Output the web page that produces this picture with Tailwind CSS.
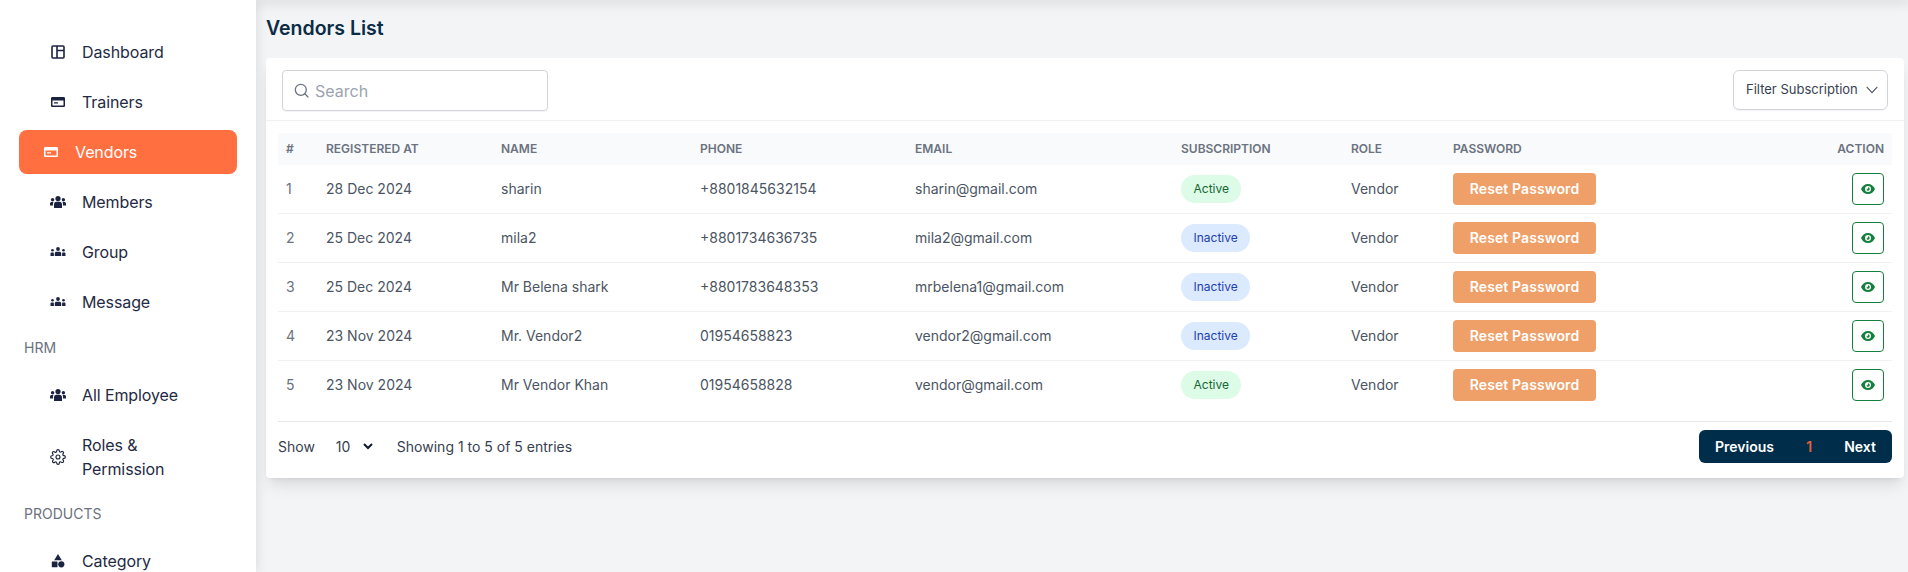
<!DOCTYPE html>
<html lang="en">
<head>
	<meta charset="UTF-8">
	<meta name="viewport" content="width=device-width, initial-scale=1.0">
	<title>Vendors List</title>
	<script src="https://cdn.jsdelivr.net/npm/@tailwindcss/browser@4"></script>
</head>
<body class="bg-[#f3f4f6] font-['Inter',sans-serif] h-[572px] overflow-hidden flex">

<aside class="w-[256px] h-[572px] shrink-0 bg-white shadow-[0_0_12px_rgba(0,0,0,0.12)] overflow-hidden pt-[30px] text-base tracking-[-0.1px] text-[#1f2a44] z-10">
	<a class="h-11 mb-1.5 flex items-center pl-[51px]">
		<svg class="w-[14px] h-[14px] mr-[17px]" viewBox="0 0 14 14" fill="none" stroke="#1c2340" stroke-width="1.600"><rect x="1" y="1" width="12" height="12" rx="1"/><path d="M6 1v12M6 5.500h7"/></svg>
		Dashboard
	</a>
	<a class="h-11 mb-1.5 flex items-center pl-[51px]">
		<svg class="w-[14px] h-[14px] mr-[17px]" viewBox="0 0 14 14" fill="#1c2340"><path fill-rule="evenodd" d="M1.300 2h11.400c.7 0 1.300.6 1.300 1.300v7.400c0 .7-.6 1.300-1.300 1.300H1.300C.6 12 0 11.400 0 10.700V3.300C0 2.600.6 2 1.300 2zM1.500 5.500v5h11v-5zM3 7.200h4v1.400H3z"/></svg>
		Trainers
	</a>
	<a class="h-11 mb-1.5 mx-[19px] flex items-center pl-[25px] bg-[#ff6f3f] rounded-lg text-white">
		<svg class="w-[14px] h-[14px] mr-[17px]" viewBox="0 0 14 14" fill="#fff"><path fill-rule="evenodd" d="M1.300 2h11.400c.7 0 1.300.6 1.300 1.300v7.400c0 .7-.6 1.300-1.300 1.300H1.300C.6 12 0 11.400 0 10.700V3.300C0 2.600.6 2 1.300 2zM1.500 5.500v5h11v-5zM3 7.200h4v1.400H3z"/></svg>
		Vendors
	</a>
	<a class="h-11 mb-1.5 flex items-center pl-[50px]">
		<svg class="w-4 h-4 mr-4" viewBox="0 0 16 16" fill="#1c2340"><circle cx="8" cy="4.600" r="2.600"/><circle cx="2.600" cy="5.800" r="1.700"/><circle cx="13.400" cy="5.800" r="1.700"/><path d="M4 14v-3.500C4 8.800 5 7.800 6.400 7.800h3.200c1.400 0 2.400 1 2.400 2.700V14zM0 11.500V9.600C0 8.500.8 8 1.600 8h1.900C3 8.800 3 9.500 3 11.500zM16 11.500V9.600C16 8.500 15.200 8 14.400 8h-1.900c.5.800.5 1.500.5 3.500z"/></svg>
		Members
	</a>
	<a class="h-11 mb-1.5 flex items-center pl-[50px]">
		<svg class="w-4 h-4 mr-4" viewBox="0 0 16 16" fill="#1c2340"><circle cx="8" cy="5" r="1.900"/><circle cx="2.500" cy="6.300" r="1.300"/><circle cx="13.500" cy="6.300" r="1.300"/><path d="M4.800 12V9.500c0-1.100.8-1.700 1.700-1.700h3c.9 0 1.700.6 1.700 1.700V12zM.5 12V9.500c0-.7.5-1.100 1.200-1.100h1.900c.2 0 .3 1 .3 3.600zM15.500 12V9.500c0-.7-.5-1.100-1.200-1.100h-1.900c-.2 0-.3 1-.3 3.600z"/></svg>
		Group
	</a>
	<a class="h-11 flex items-center pl-[50px]">
		<svg class="w-4 h-4 mr-4" viewBox="0 0 16 16" fill="#1c2340"><circle cx="8" cy="5" r="1.900"/><circle cx="2.500" cy="6.300" r="1.300"/><circle cx="13.500" cy="6.300" r="1.300"/><path d="M4.800 12V9.500c0-1.100.8-1.700 1.700-1.700h3c.9 0 1.700.6 1.700 1.700V12zM.5 12V9.500c0-.7.5-1.100 1.200-1.100h1.900c.2 0 .3 1 .3 3.600zM15.500 12V9.500c0-.7-.5-1.100-1.200-1.100h-1.900c-.2 0-.3 1-.3 3.600z"/></svg>
		Message
	</a>

	<p class="pl-6 mt-[16px] mb-[17px] text-sm leading-4 tracking-normal text-[#6b7280]">HRM</p>
	<a class="h-11 flex items-center pl-[50px]">
		<svg class="w-4 h-4 mr-4" viewBox="0 0 16 16" fill="#1c2340"><circle cx="8" cy="4.600" r="2.600"/><circle cx="2.600" cy="5.800" r="1.700"/><circle cx="13.400" cy="5.800" r="1.700"/><path d="M4 14v-3.500C4 8.800 5 7.800 6.400 7.800h3.200c1.400 0 2.400 1 2.400 2.700V14zM0 11.500V9.600C0 8.500.8 8 1.600 8h1.900C3 8.800 3 9.500 3 11.500zM16 11.500V9.600C16 8.500 15.200 8 14.400 8h-1.900c.5.800.5 1.500.5 3.500z"/></svg>
		All Employee
	</a>
	<a class="mt-1.5 h-[68px] flex items-center pl-[50px] leading-6">
		<svg class="w-4 h-4 mr-4 shrink-0" viewBox="0 0 24 24" fill="none" stroke="#1c2340" stroke-width="1.700" stroke-linecap="round" stroke-linejoin="round"><circle cx="12" cy="12" r="3"/><path d="M19.400 15a1.650 1.650 0 0 0 .33 1.820l.06.06a2 2 0 1 1-2.830 2.830l-.06-.06a1.650 1.650 0 0 0-2.800 1.170V21a2 2 0 1 1-4 0v-.09a1.650 1.650 0 0 0-2.820-1.110l-.06.06a2 2 0 1 1-2.830-2.830l.06-.06a1.650 1.650 0 0 0-1.170-2.800H3a2 2 0 1 1 0-4h.09a1.650 1.650 0 0 0 1.110-2.820l-.06-.06a2 2 0 1 1 2.830-2.830l.06.06a1.650 1.650 0 0 0 1.820.33H9a1.650 1.650 0 0 0 1-1.510V3a2 2 0 1 1 4 0v.09a1.650 1.650 0 0 0 2.800 1.170l.06-.06a2 2 0 1 1 2.830 2.830l-.06.06a1.650 1.650 0 0 0-.33 1.820V9a1.650 1.650 0 0 0 1.510 1H21a2 2 0 1 1 0 4h-.09a1.650 1.650 0 0 0-1.510 1z"/></svg>
		<span class="w-[110px]">Roles &amp; Permission</span>
	</a>
	<p class="pl-6 mt-[15px] mb-[17px] text-sm leading-4 tracking-normal text-[#6b7280]">PRODUCTS</p>
	<a class="h-11 flex items-center pl-[51px]">
		<svg class="w-[14px] h-[14px] mr-[17px]" viewBox="0 0 14 14" fill="#1c2340"><path d="M7 0l3.800 6.300H3.200z"/><rect x=".8" y="7.500" width="5.700" height="5.700" rx=".5"/><circle cx="10.300" cy="10.300" r="3.100"/></svg>
		Category
	</a>
</aside>

<main class="flex-1 min-w-0">
	<div class="h-0 shadow-[0_0_12px_3px_rgba(0,0,0,0.14)]"></div>
	<h1 class="pl-[10px] pr-1 pt-4 h-[58px] text-[19.5px] leading-6 font-semibold text-[#0b2c45]">Vendors List</h1>

	<section class="ml-[10px] mr-1 h-[420px] bg-white rounded-sm shadow-lg">
		<div class="h-[63px] pt-3 pl-4 pr-4 flex justify-between items-start border-b border-[#f0f1f3]">
			<label class="w-[266px] h-[41px] flex items-center pl-[11px] gap-[6px] border border-[#d1d5db] rounded text-base text-[#9ca3af] shadow-[0_1px_1px_rgba(0,0,0,0.05)]">
				<svg class="w-[15px] h-[15px]" viewBox="0 0 15 15" fill="none" stroke="#6b7280" stroke-width="1.300" stroke-linecap="round"><circle cx="6.800" cy="6.800" r="5.500"/><path d="M11 11l3 3"/></svg>
				Search
			</label>
			<button class="w-[155px] h-10 pl-3 flex items-center gap-2 border border-[#d1d5db] rounded-md text-[13px] text-[#374151] shadow-[0_1px_1px_rgba(0,0,0,0.05)]">
				Filter Subscription
				<svg class="w-3 h-2" viewBox="0 0 11 7" fill="none" stroke="#4b5563" stroke-width="1"><path d="M.6.600L5.500 6 10.400.600"/></svg>
			</button>
		</div>

		<div class="mx-3 mt-3">
			<table class="w-[1614px] table-fixed border-separate border-spacing-0 text-sm text-[#4b5563]">
				<colgroup>
					<col class="w-[40px]"><col class="w-[175px]"><col class="w-[199px]"><col class="w-[215px]"><col class="w-[266px]"><col class="w-[170px]"><col class="w-[102px]"><col class="w-[300px]"><col>
				</colgroup>
				<thead>
					<tr class="h-8 bg-[#f9fafb] text-xs font-semibold text-[#6b7280] text-left">
						<th class="px-2 font-semibold">#</th>
						<th class="px-2 font-semibold">REGISTERED AT</th>
						<th class="px-2 font-semibold">NAME</th>
						<th class="px-2 font-semibold">PHONE</th>
						<th class="px-2 font-semibold">EMAIL</th>
						<th class="px-2 font-semibold">SUBSCRIPTION</th>
						<th class="px-2 font-semibold">ROLE</th>
						<th class="px-2 font-semibold">PASSWORD</th>
						<th class="px-2 font-semibold text-right">ACTION</th>
					</tr>
				</thead>
				<tbody>
					<tr class="h-[49px] [&>td]:border-b [&>td]:border-[#f0f1f3]">
						<td class="px-2 text-[#6b7280]">1</td><td class="px-2">28 Dec 2024</td><td class="px-2">sharin</td><td class="px-2">+8801845632154</td><td class="px-2">sharin@gmail.com</td>
						<td class="px-2"><span class="inline-flex items-center h-7 px-[12.5px] rounded-[14px] bg-[#dcfce7] text-xs text-[#166534]">Active</span></td>
						<td class="px-2">Vendor</td>
						<td class="px-2"><button class="w-[143px] h-8 rounded bg-[#ef9f68] text-white font-semibold tracking-[0.1px]">Reset Password</button></td>
						<td class="px-2 text-right"><button class="inline-flex items-center justify-center w-8 h-8 border border-[#15803d] rounded align-middle"><svg class="w-[14px] h-[10px]" viewBox="0 0 14 10"><path fill="#15803d" fill-rule="evenodd" d="M7 0c3.200 0 5.800 2 7 5-1.200 3-3.800 5-7 5S1.200 8 0 5c1.200-3 3.800-5 7-5zm0 2a3 3 0 1 0 0 6 3 3 0 0 0 0-6zm0 1.300a1.700 1.700 0 1 1-1.600 2.200c.8.200 1.900-.8 1.600-2.200z"/></svg></button></td>
					</tr>
					<tr class="h-[49px] [&>td]:border-b [&>td]:border-[#f0f1f3]">
						<td class="px-2 text-[#6b7280]">2</td><td class="px-2">25 Dec 2024</td><td class="px-2">mila2</td><td class="px-2">+8801734636735</td><td class="px-2">mila2@gmail.com</td>
						<td class="px-2"><span class="inline-flex items-center h-7 px-[12.5px] rounded-[14px] bg-[#dbeafe] text-xs text-[#1e40af]">Inactive</span></td>
						<td class="px-2">Vendor</td>
						<td class="px-2"><button class="w-[143px] h-8 rounded bg-[#ef9f68] text-white font-semibold tracking-[0.1px]">Reset Password</button></td>
						<td class="px-2 text-right"><button class="inline-flex items-center justify-center w-8 h-8 border border-[#15803d] rounded align-middle"><svg class="w-[14px] h-[10px]" viewBox="0 0 14 10"><path fill="#15803d" fill-rule="evenodd" d="M7 0c3.200 0 5.800 2 7 5-1.200 3-3.800 5-7 5S1.200 8 0 5c1.200-3 3.800-5 7-5zm0 2a3 3 0 1 0 0 6 3 3 0 0 0 0-6zm0 1.300a1.700 1.700 0 1 1-1.600 2.200c.8.200 1.900-.8 1.600-2.200z"/></svg></button></td>
					</tr>
					<tr class="h-[49px] [&>td]:border-b [&>td]:border-[#f0f1f3]">
						<td class="px-2 text-[#6b7280]">3</td><td class="px-2">25 Dec 2024</td><td class="px-2">Mr Belena shark</td><td class="px-2">+8801783648353</td><td class="px-2">mrbelena1@gmail.com</td>
						<td class="px-2"><span class="inline-flex items-center h-7 px-[12.5px] rounded-[14px] bg-[#dbeafe] text-xs text-[#1e40af]">Inactive</span></td>
						<td class="px-2">Vendor</td>
						<td class="px-2"><button class="w-[143px] h-8 rounded bg-[#ef9f68] text-white font-semibold tracking-[0.1px]">Reset Password</button></td>
						<td class="px-2 text-right"><button class="inline-flex items-center justify-center w-8 h-8 border border-[#15803d] rounded align-middle"><svg class="w-[14px] h-[10px]" viewBox="0 0 14 10"><path fill="#15803d" fill-rule="evenodd" d="M7 0c3.200 0 5.800 2 7 5-1.200 3-3.800 5-7 5S1.200 8 0 5c1.200-3 3.800-5 7-5zm0 2a3 3 0 1 0 0 6 3 3 0 0 0 0-6zm0 1.300a1.700 1.700 0 1 1-1.600 2.200c.8.200 1.900-.8 1.600-2.200z"/></svg></button></td>
					</tr>
					<tr class="h-[49px] [&>td]:border-b [&>td]:border-[#f0f1f3]">
						<td class="px-2 text-[#6b7280]">4</td><td class="px-2">23 Nov 2024</td><td class="px-2">Mr. Vendor2</td><td class="px-2">01954658823</td><td class="px-2">vendor2@gmail.com</td>
						<td class="px-2"><span class="inline-flex items-center h-7 px-[12.5px] rounded-[14px] bg-[#dbeafe] text-xs text-[#1e40af]">Inactive</span></td>
						<td class="px-2">Vendor</td>
						<td class="px-2"><button class="w-[143px] h-8 rounded bg-[#ef9f68] text-white font-semibold tracking-[0.1px]">Reset Password</button></td>
						<td class="px-2 text-right"><button class="inline-flex items-center justify-center w-8 h-8 border border-[#15803d] rounded align-middle"><svg class="w-[14px] h-[10px]" viewBox="0 0 14 10"><path fill="#15803d" fill-rule="evenodd" d="M7 0c3.200 0 5.800 2 7 5-1.200 3-3.800 5-7 5S1.200 8 0 5c1.200-3 3.800-5 7-5zm0 2a3 3 0 1 0 0 6 3 3 0 0 0 0-6zm0 1.300a1.700 1.700 0 1 1-1.600 2.200c.8.200 1.900-.8 1.600-2.200z"/></svg></button></td>
					</tr>
					<tr class="h-12">
						<td class="px-2 text-[#6b7280]">5</td><td class="px-2">23 Nov 2024</td><td class="px-2">Mr Vendor Khan</td><td class="px-2">01954658828</td><td class="px-2">vendor@gmail.com</td>
						<td class="px-2"><span class="inline-flex items-center h-7 px-[12.5px] rounded-[14px] bg-[#dcfce7] text-xs text-[#166534]">Active</span></td>
						<td class="px-2">Vendor</td>
						<td class="px-2"><button class="w-[143px] h-8 rounded bg-[#ef9f68] text-white font-semibold tracking-[0.1px]">Reset Password</button></td>
						<td class="px-2 text-right"><button class="inline-flex items-center justify-center w-8 h-8 border border-[#15803d] rounded align-middle"><svg class="w-[14px] h-[10px]" viewBox="0 0 14 10"><path fill="#15803d" fill-rule="evenodd" d="M7 0c3.200 0 5.800 2 7 5-1.200 3-3.800 5-7 5S1.200 8 0 5c1.200-3 3.800-5 7-5zm0 2a3 3 0 1 0 0 6 3 3 0 0 0 0-6zm0 1.300a1.700 1.700 0 1 1-1.600 2.200c.8.200 1.900-.8 1.600-2.200z"/></svg></button></td>
					</tr>
				</tbody>
			</table>

			<div class="w-[1614px] mt-3 pt-2 border-t border-[#e5e7eb] flex items-center justify-between text-sm text-[#374151]">
				<div class="flex items-center">
					<span>Show</span>
					<span class="ml-[21px] w-[27px]">10</span>
					<svg class="w-[10px] h-[7px]" viewBox="0 0 10 7" fill="none" stroke="#111827" stroke-width="2"><path d="M1 1l4 4 4-4"/></svg>
					<span class="ml-[24px]">Showing 1 to 5 of 5 entries</span>
				</div>
				<div class="w-[193px] h-[33px] pl-4 pr-4 flex items-center justify-between bg-[#002d4a] rounded-md font-semibold text-white">
					<span>Previous</span><span class="text-[#e2623a]">1</span><span>Next</span>
				</div>
			</div>
		</div>
	</section>
</main>

</body>
</html>
